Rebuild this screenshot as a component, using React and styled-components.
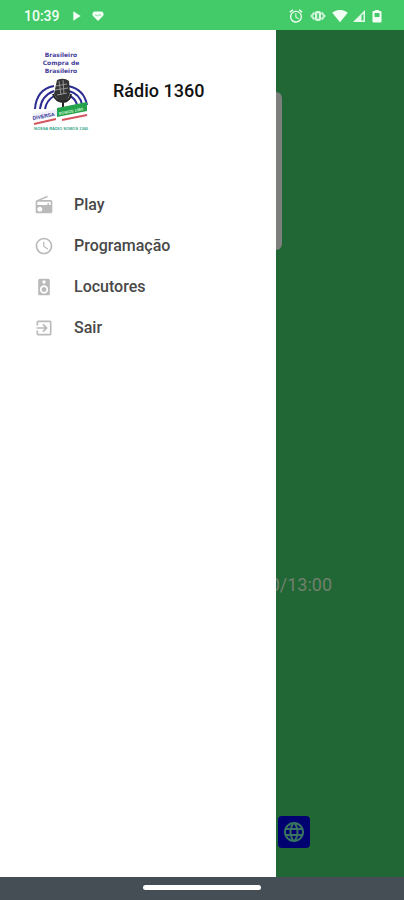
import React from "react"
import styled, { createGlobalStyle } from "styled-components"
import {
  MdAlarm,
  MdExitToApp,
  MdLanguage,
  MdPlayArrow,
  MdRadio,
  MdSchedule,
  MdSignalWifi4Bar,
  MdSpeaker,
} from "react-icons/md"

const menu = [
  { label: "Play", Icon: MdRadio },
  { label: "Programação", Icon: MdSchedule },
  { label: "Locutores", Icon: MdSpeaker },
  { label: "Sair", Icon: MdExitToApp },
]

const HeartIcon = () => (
  <svg width="12" height="12" viewBox="0 0 12 12" aria-hidden="true">
    <path
      d="M6 11 1 6C-.2 4.400 .6 1.500 3 1.500h6c2.400 0 3.200 2.900 2 4.500z"
      fill="#f2fff5"
    />
    <path d="M3 5h1.500l1 1.200L7 4.500l.8.700H9" fill="none" stroke="#7fdb99" />
  </svg>
)

const VibrateIcon = () => (
  <svg width="18" height="14" viewBox="0 0 18 14" aria-hidden="true">
    <path
      d="M5.500 3.500 2.500 7l3 3.500M12.500 3.500l3 3.500-3 3.500"
      fill="none"
      stroke="#c9f3d4"
      strokeWidth="2"
    />
    <rect x="6" y="2" width="6" height="10" rx="2" fill="#d9f7e1" />
    <rect x="8" y="4" width="2" height="6" rx="1" fill="#5fd17f" />
  </svg>
)

const SignalIcon = () => (
  <svg width="12" height="14" viewBox="0 0 12 14" aria-hidden="true">
    <path d="M0 13 12 1v12z" fill="#e4fbea" />
    <path d="M8.500 6.500 10.500 4.500v7h-2z" fill="#43ca69" />
  </svg>
)

const BatteryIcon = () => (
  <svg width="14" height="14" viewBox="0 0 14 14" aria-hidden="true">
    <path
      d="M5 1h4v1h1.500q1 0 1 1v9.500q0 1-1 1h-7q-1 0-1-1V3q0-1 1-1H5z"
      fill="#f2fff5"
    />
    <rect x="4.500" y="4" width="5" height="4" fill="#43ca69" />
  </svg>
)

const Logo = () => (
  <svg width="60" height="84" viewBox="0 0 60 84" role="img" aria-label="Rádio 1360">
    <g fill="#45419a" fontFamily="DejaVu Sans" fontWeight="bold" fontSize="6" textAnchor="middle">
      <text x="31" y="9">Brasileiro</text>
      <text x="31" y="17">Compra de</text>
      <text x="31" y="25">Brasileiro</text>
    </g>
    <g fill="none" stroke="#2d2d91" strokeWidth="2">
      <path d="M5 61C6 48 13 40 24 38M38 38c10 2 17 8 19 19" />
      <path d="M10 61C11 52 16 46 24 43M39 43c7 2 12 7 13 14" />
      <path d="M15 61c1-6 4-10 9-13M40 48c4 2 6 5 7 9" />
    </g>
    <path d="M27 32q7-3 12 1l1 12q-1 7-7 9-6-1-9-8z" fill="#343434" />
    <path
      d="m29 33 2 14m2-15 1 14M26 38l11-2M25 42l13-2M27 47l10-2"
      fill="none"
      stroke="#969696"
    />
    <path d="M23 46q3 8 10 8 7-1 8-8M33 54v6" fill="none" stroke="#242424" strokeWidth="2" />
    <path d="m3 66 24-5v7L3 73z" fill="#f0f0fc" />
    <path d="m27 60 30-6v9l-30 6z" fill="#25a34a" />
    <path d="m4 76 22-5M32 72l25-5" stroke="#d5555e" strokeWidth="2" />
    <g fontFamily="Liberation Sans" fontWeight="bold">
      <text x="3" y="72" fontSize="5" fill="#30308e" transform="rotate(-11 3 72)">
        DIVERSA
      </text>
      <text x="29" y="67" fontSize="4" fill="#d3f5d8" transform="rotate(-11 29 67)">
        SOMOS 1360
      </text>
      <text x="4" y="82" fontSize="4" fill="#35a387">
        NOSSA RÁDIO SOMOS 1360
      </text>
    </g>
  </svg>
)

const App = () => (
  <Screen>
    <GlobalStyle />
    <StatusBar>
      <StatusGroup $gap={8}>
        <Clock>10:39</Clock>
        <MdPlayArrow size={16} />
        <HeartIcon />
      </StatusGroup>
      <StatusGroup $gap={5}>
        <MdAlarm size={16} />
        <VibrateIcon />
        <MdSignalWifi4Bar size={16} />
        <SignalIcon />
        <BatteryIcon />
      </StatusGroup>
    </StatusBar>
    <Body>
      <Player>
        <Cover />
        <Schedule>12:00/13:00</Schedule>
        <Links>
          <SiteButton type="button" aria-label="Site">
            <MdLanguage size={24} />
          </SiteButton>
        </Links>
      </Player>
      <Drawer>
        <Header>
          <Logo />
          <Title>Rádio 1360</Title>
        </Header>
        <Menu>
          {menu.map(({ label, Icon }) => (
            <MenuItem key={label} type="button">
              <Icon size={20} />
              <span>{label}</span>
            </MenuItem>
          ))}
        </Menu>
      </Drawer>
    </Body>
    <NavigationBar>
      <Handle />
    </NavigationBar>
  </Screen>
)

const GlobalStyle = createGlobalStyle`
  * {
    box-sizing: border-box;
  }

  body {
    margin: 0;
    font-family: Roboto, sans-serif;
  }
`

const Screen = styled.div`
  display: flex;
  flex-direction: column;
  min-height: 100vh;
`

const StatusBar = styled.div`
  display: flex;
  align-items: center;
  justify-content: space-between;
  height: 30px;
  padding: 2px 20px 0 24px;
  background-color: #43ca69;
  color: #f2fff5;
`

const StatusGroup = styled.div`
  display: flex;
  align-items: center;
  gap: ${({ $gap }) => $gap}px;
`

const Clock = styled.span`
  font-size: 14px;
  font-weight: 500;
`

const Body = styled.div`
  position: relative;
  display: flex;
  flex: 1;
  background-color: #206735;
`

const Player = styled.main`
  display: flex;
  flex: 1;
  flex-direction: column;
  align-items: center;
  padding: 62px 0 29px;
`

const Cover = styled.div`
  width: 160px;
  height: 158px;
  border-radius: 6px;
  background-color: #7d7f7d;
`

const Schedule = styled.p`
  width: 260px;
  margin: 324px 0 auto;
  color: #72806c;
  font-size: 18px;
  line-height: 22px;
  text-align: right;
`

const Links = styled.div`
  display: flex;
  justify-content: flex-end;
  width: 216px;
`

const SiteButton = styled.button`
  display: flex;
  align-items: center;
  justify-content: center;
  width: 32px;
  height: 32px;
  padding: 0;
  border: 0;
  border-radius: 4px;
  background-color: #000071;
  color: #39745e;
`

/* slides over the player */
const Drawer = styled.aside`
  position: absolute;
  top: 0;
  bottom: 0;
  left: 0;
  width: 276px;
  background-color: #ffffff;
`

const Header = styled.header`
  display: flex;
  align-items: center;
  gap: 23px;
  padding: 18px 30px;
`

const Title = styled.h1`
  margin: 0;
  color: #111111;
  font-size: 18px;
  font-weight: 500;
`

const Menu = styled.nav`
  display: flex;
  flex-direction: column;
  padding-top: 34px;
`

const MenuItem = styled.button`
  display: flex;
  align-items: center;
  gap: 20px;
  height: 41px;
  padding: 0 34px;
  border: 0;
  background: none;
  color: #484848;
  font-family: inherit;
  font-size: 16px;
  font-weight: 500;

  svg {
    color: #bababa;
  }
`

const NavigationBar = styled.div`
  display: flex;
  justify-content: center;
  height: 23px;
  padding-top: 8px;
  background-color: #454d55;
`

const Handle = styled.div`
  width: 118px;
  height: 5px;
  border-radius: 3px;
  background-color: #ffffff;
`

export default App
